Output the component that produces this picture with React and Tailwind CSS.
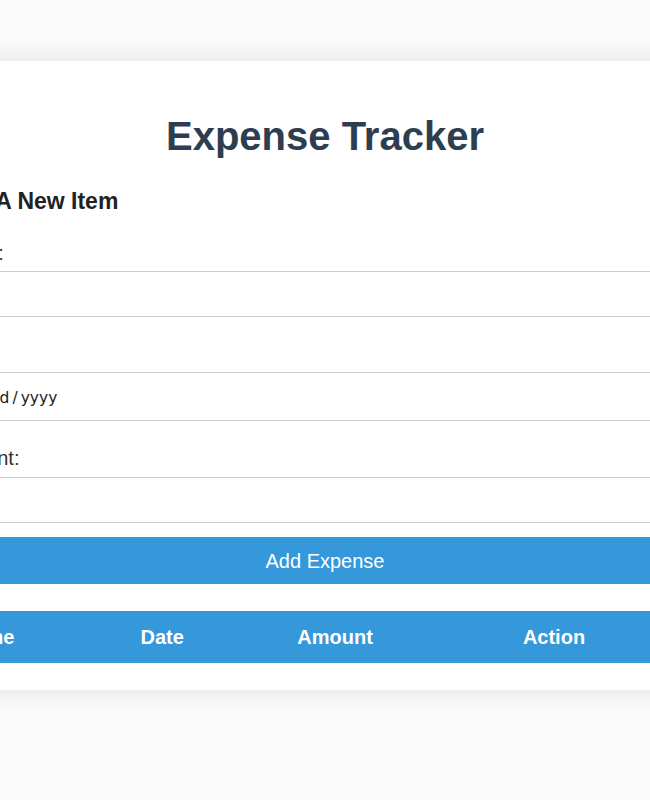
import { useState } from "react";

const ExpenseTracker = () => {
  const [name, setName] = useState("");
  const [date, setDate] = useState("");
  const [amount, setAmount] = useState("");
  const [expenses, setExpenses] = useState([]);

  const addExpense = (e) => {
    e.preventDefault();
    if (!name || !amount) return;
    setExpenses([...expenses, { id: Date.now(), name, date, amount }]);
    setName("");
    setDate("");
    setAmount("");
  };

  return (
    <div className="min-h-screen overflow-hidden bg-[#fafafa] flex justify-center items-start pt-[61px] font-['Liberation_Sans',Arial,sans-serif]">
      <div className="w-[810px] shrink-0 bg-white px-[25px] pt-[25px] pb-[27px] shadow-[0_0_25px_rgba(0,0,0,0.1)]">
        <h1 className="mt-[27px] text-center text-[40px] leading-[46px] font-bold text-[#2c3e50]">
          Expense Tracker
        </h1>

        <h2 className="mt-[28px] text-[23px] leading-[28px] font-bold text-[#222]">
          Add A New Item
        </h2>

        <form onSubmit={addExpense} className="mt-[25px] flex flex-col">
          <label className="mt-[2px] block text-[20px] leading-[23px] text-[#333]">Name:</label>
          <input
            type="text"
            value={name}
            onChange={(e) => setName(e.target.value)}
            className="mt-[6px] h-[46px] w-full border border-[#ccc] px-[12px] text-[20px] outline-none"
          />

          <label className="mt-[26px] block text-[20px] leading-[23px] text-[#333]">Date:</label>
          <input
            type="text"
            value={date}
            onChange={(e) => setDate(e.target.value)}
            placeholder={"mm\u2009/\u2009dd\u2009/\u2009yyyy"}
            className="mt-[6px] h-[49px] w-full border border-[#ccc] pl-[2px] pr-[12px] pt-[3px] font-['DejaVu_Sans',sans-serif] text-[15.5px] text-[#222] placeholder:text-[#222] outline-none"
          />

          <label className="mt-[26px] block text-[20px] leading-[23px] text-[#333]">Amount:</label>
          <input
            type="number"
            value={amount}
            onChange={(e) => setAmount(e.target.value)}
            className="mt-[7px] h-[46px] w-full border border-[#ccc] px-[12px] text-[20px] outline-none"
          />

          <button
            type="submit"
            className="mt-[14px] h-[47px] w-full bg-[#3498db] text-[20px] text-white"
          >
            Add Expense
          </button>
        </form>

        <table className="mt-[27px] w-full table-auto border-collapse">
          <thead>
            <tr className="bg-[#3498db] text-white">
              <th className="px-[15px] py-[15px] text-left text-[20px] leading-[22px] font-bold">Name</th>
              <th className="px-[15px] py-[15px] text-left text-[20px] leading-[22px] font-bold">Date</th>
              <th className="px-[15px] py-[15px] text-left text-[20px] leading-[22px] font-bold">Amount</th>
              <th className="px-[15px] py-[15px] text-left text-[20px] leading-[22px] font-bold">Action</th>
            </tr>
          </thead>
          <tbody>
            {expenses.map((item) => (
              <tr key={item.id} className="border-b border-[#ddd] text-[20px]">
                <td className="px-[15px] py-[12px]">{item.name}</td>
                <td className="px-[15px] py-[12px]">{item.date}</td>
                <td className="px-[15px] py-[12px]">{item.amount}</td>
                <td className="px-[15px] py-[12px]">
                  <button
                    type="button"
                    onClick={() => setExpenses(expenses.filter((x) => x.id !== item.id))}
                    className="text-[#e74c3c]"
                  >
                    Delete
                  </button>
                </td>
              </tr>
            ))}
          </tbody>
        </table>
      </div>
    </div>
  );
};

export default ExpenseTracker;
